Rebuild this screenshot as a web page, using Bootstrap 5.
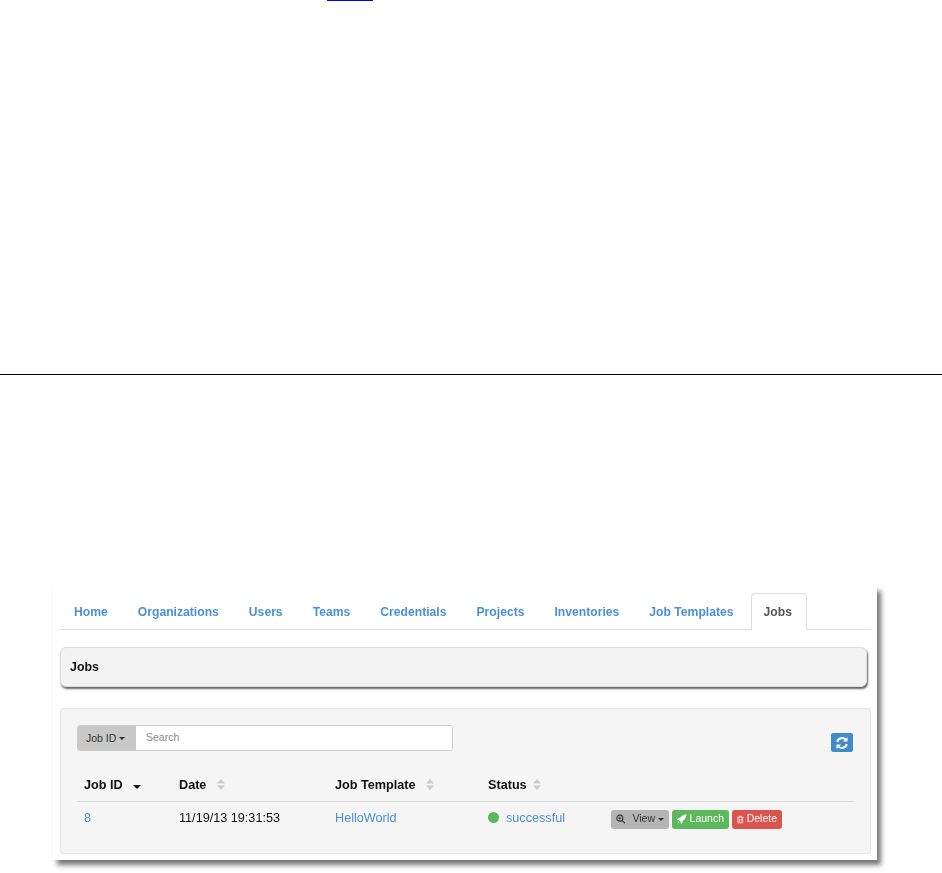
<!DOCTYPE html>
<html lang="en">
<head>
<meta charset="utf-8">
<title>Jobs</title>
<link rel="stylesheet" href="https://cdn.jsdelivr.net/npm/bootstrap@5.3.0/dist/css/bootstrap.min.css">
<style>
html,body{height:873px;overflow:hidden;background:#fff}
body{font-family:"Liberation Sans",Arial,sans-serif;font-size:11.5px;color:#111}
.top-ref{display:block;width:46px;height:1px;margin-left:327px;background:#00f}
.page-rule{height:1px;background:#000;margin-top:373px}
.shot{width:824px;height:274px;margin:211px 0 0 53px;background:#fff;padding:7px 6px 0 7px;box-shadow:4px 5px 5px #777;filter:blur(.35px)}
.tabs{display:flex;height:37px;gap:4px;padding:0 0 0 1px;margin:0;list-style:none;border-bottom:1px solid #ddd}
.tabs a{display:block;height:37px;padding:10px 12px 0;border:1px solid transparent;border-radius:4px 4px 0 0;color:#4a90d6;font-weight:700;font-size:12.17px;line-height:17px;text-decoration:none}
.tabs a.on{color:#555;background:#fff;border-color:#ddd #ddd #fff;padding-right:14px}
.title-bar{width:807px;height:40px;margin-top:17px;padding:0 9px;line-height:39px;font-weight:700;font-size:12.4px;background:#f3f3f3;border:1px solid #ddd;border-radius:6px;box-shadow:1px 2px 2px #666}
.well-box{height:146px;margin-top:21px;padding:16px 17px 0 16px;background:#f5f5f5;border:1px solid #e6e6e6;border-radius:3px}
.search-row{display:flex;justify-content:space-between;height:47px}
.search-group{display:flex;width:376px;height:26px;border:1px solid #ccc;border-radius:3px;overflow:hidden;background:#fff}
.search-add{width:58px;background:#c8c8c8;color:#333;font-size:10.5px;line-height:24px;padding-left:8px}
.search-text{flex:1;border:0;outline:0;padding:0 10px;font-size:10.5px;color:#777;background:#fff}
.search-text::placeholder{color:#888;opacity:1}
.caret-mini{display:inline-block;width:0;height:0;margin-left:3px;vertical-align:2px;border:3px solid transparent;border-top-color:currentColor;border-bottom:0}
.refresh{display:flex;align-items:center;justify-content:center;width:22px;height:19px;margin-top:8px;padding:0;background:#428bca;border:0;border-radius:2px}
.job-table{width:777px;table-layout:fixed;border-collapse:collapse;margin:0;font-size:12.65px}
.job-table th{height:29px;padding:0 6px 2px 7px;font-weight:700;border-bottom:1px solid #ddd;vertical-align:middle;white-space:nowrap}
.job-table td{height:34px;padding:0 6px 0 7px;vertical-align:middle;white-space:nowrap}
.job-table a{color:#4a90d6;text-decoration:none}
.sorter{display:inline-block;width:8px;height:11px;margin-left:7px;vertical-align:-1px}
.sorter-tight{margin-left:3px}
.dot{display:inline-block;width:11px;height:11px;margin-right:7px;border-radius:50%;background:#5cb85c;vertical-align:-1px}
.act-row{display:flex;gap:3px;margin-top:2px}
.act{display:inline-flex;align-items:center;gap:3px;height:19px;padding:0 5px;border:0;border-radius:3px;font-size:10.5px;color:#fff;white-space:nowrap}
.act-view{width:58px;background:#b5b5b5;color:#333}
.act-launch{width:57px;background:#5cb85c}
.act-delete{width:50px;background:#d9534f}
</style>
</head>
<body>
<div class="top-ref"></div>
<div class="page-rule"></div>
<div class="shot">
  <ul class="tabs">
    <li><a href="#">Home</a></li>
    <li><a href="#">Organizations</a></li>
    <li><a href="#">Users</a></li>
    <li><a href="#">Teams</a></li>
    <li><a href="#">Credentials</a></li>
    <li><a href="#">Projects</a></li>
    <li><a href="#">Inventories</a></li>
    <li><a href="#">Job Templates</a></li>
    <li><a href="#" class="on">Jobs</a></li>
  </ul>
  <div class="title-bar">Jobs</div>
  <div class="well-box">
    <div class="search-row">
      <div class="search-group">
        <div class="search-add">Job ID<span class="caret-mini"></span></div>
        <input class="search-text" type="text" placeholder="Search">
      </div>
      <button class="refresh" type="button" aria-label="Refresh">
        <svg width="14" height="14" viewBox="0 0 14 14" fill="none" stroke="#fff" stroke-width="2"><path d="M2.2 6A5 5 0 0 1 11 4"/><path d="M11.8 8A5 5 0 0 1 3 10"/><path d="M12.5 1v4.5H8z" fill="#fff" stroke="none"/><path d="M1.5 13V8.500H6z" fill="#fff" stroke="none"/></svg>
      </button>
    </div>
    <table class="job-table">
      <colgroup><col style="width:95px"><col style="width:156px"><col style="width:153px"><col style="width:123px"><col></colgroup>
      <thead>
        <tr>
          <th>Job ID <svg class="sorter" viewBox="0 0 8 11"><path d="M0 6h8l-4 4z" fill="#111"/></svg></th>
          <th>Date <svg class="sorter" viewBox="0 0 8 11"><path d="M4 0l4 4.500H0zM0 6.500h8L4 11z" fill="#ccc"/></svg></th>
          <th>Job Template <svg class="sorter" viewBox="0 0 8 11"><path d="M4 0l4 4.500H0zM0 6.500h8L4 11z" fill="#ccc"/></svg></th>
          <th>Status <svg class="sorter sorter-tight" viewBox="0 0 8 11"><path d="M4 0l4 4.500H0zM0 6.500h8L4 11z" fill="#ccc"/></svg></th>
          <th></th>
        </tr>
      </thead>
      <tbody>
        <tr>
          <td><a href="#">8</a></td>
          <td>11/19/13 19:31:53</td>
          <td><a href="#">HelloWorld</a></td>
          <td><span class="dot"></span><a href="#">successful</a></td>
          <td>
            <div class="act-row">
              <span class="act act-view"><svg width="12" height="12" viewBox="0 0 11 11" fill="none" stroke="#333" stroke-width="1.300"><circle cx="4.500" cy="4.500" r="3.500"/><path d="M7 7l3.500 3.500M3 4.500h3M4.500 3v3" stroke-width="1.200"/></svg><span class="ms-1">View</span><span class="caret-mini ms-0"></span></span>
              <span class="act act-launch"><svg width="12" height="12" viewBox="0 0 11 11" fill="#fff"><path d="M11 0C7.500 .3 5 2 3.400 4.400L1 5 0 6.500l2.500.3 1.700 1.700.3 2.500L6 10l.6-2.400C9 6 10.700 3.500 11 0zM2 8.200L.6 10.400 2.800 9z"/></svg>Launch</span>
              <span class="act act-delete"><svg width="9" height="11" viewBox="0 0 9 10" fill="none" stroke="#fff"><path d="M0 2h9M3 2V.6h3V2M1.300 2v7.500h6.400V2M3.300 4v4M5.700 4v4"/></svg>Delete</span>
            </div>
          </td>
        </tr>
      </tbody>
    </table>
  </div>
</div>
<script src="https://cdn.jsdelivr.net/npm/bootstrap@5.3.0/dist/js/bootstrap.bundle.min.js"></script>
</body>
</html>
